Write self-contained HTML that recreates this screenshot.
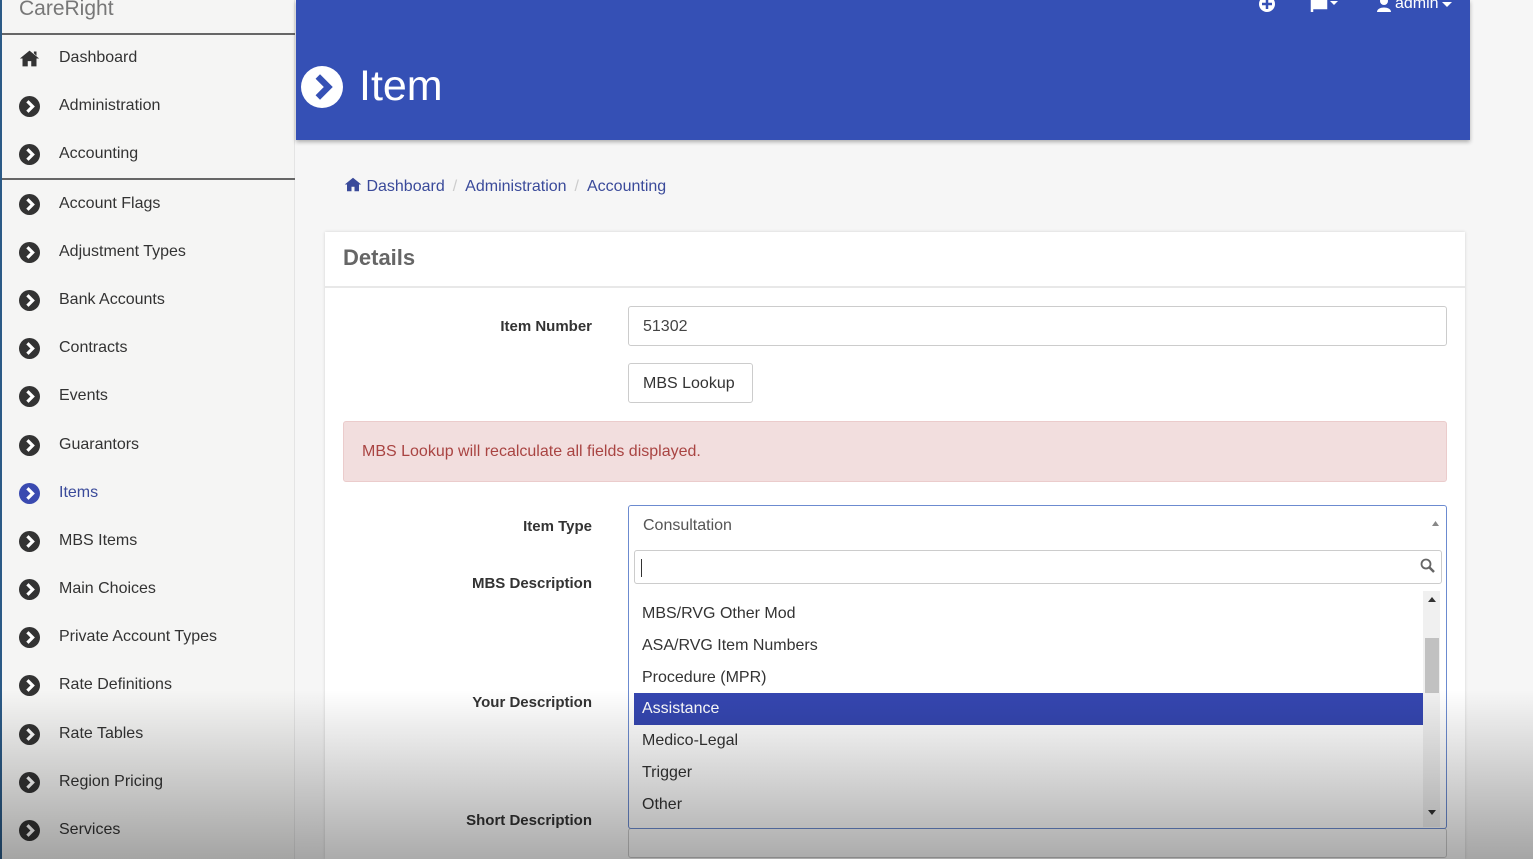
<!DOCTYPE html>
<html><head><meta charset="utf-8"><style>
*{box-sizing:border-box;margin:0;padding:0}
html{overflow:hidden;width:1533px;height:859px}
body{width:1533px;height:859px;overflow:hidden;background:#f6f6f6;font-family:"Liberation Sans",Arial,sans-serif;position:relative;color:#333}
.sb{position:absolute;left:0;top:0;width:295px;height:859px;background:#f5f5f4;border-left:2px solid #2b5a86;border-right:1px solid #e4e4e4}
.brand{position:absolute;left:17px;top:-3px;font-size:21px;color:#777}
.hr{position:absolute;left:0;width:293px;height:2px;background:#666}
.it{position:absolute;left:17px;height:24px;display:flex;align-items:center;font-size:16px;color:#333}
.it svg{width:21px;height:21px;margin-right:19px}
.hdr{position:absolute;left:296px;top:0;width:1174px;height:140px;background:#3550b5;box-shadow:0 2px 4px rgba(0,0,0,.3)}
.hdr h1{position:absolute;left:63px;top:62px;font-weight:normal;font-size:43px;color:#fff}
.bc{position:absolute;left:344px;top:177px;font-size:16px;color:#3a4a9a}
.bc span.s{color:#ccc;margin:0 8px}
.card{position:absolute;left:325px;top:232px;width:1140px;height:627px;overflow:hidden;background:#fff;box-shadow:0 0 3px rgba(0,0,0,.15)}
.ch{height:56px;border-bottom:2px solid #e8e8e8;padding:13px 18px;font-size:22px;font-weight:bold;color:#666}
.lbl{position:absolute;right:873px;font-size:15px;font-weight:bold;color:#333;text-align:right;white-space:nowrap}
.inp{position:absolute;left:303px;width:819px;height:40px;border:1px solid #ccc;border-radius:3px;padding:11px 14px;font-size:16px;color:#444}
.btn{position:absolute;left:303px;top:131px;width:125px;height:40px;border:1px solid #ccc;border-radius:3px;padding:11px 14px;font-size:16px;color:#333}
.alert{position:absolute;left:18px;top:189px;width:1104px;height:61px;background:#f2dede;border:1px solid #ebcccc;border-radius:3px;padding:21px 18px;font-size:16px;color:#a94442}
.dd{position:absolute;left:628px;top:505px;width:819px;height:324px;border:1px solid #6c8bd0;border-radius:3px;background:#fff}
.opt{position:absolute;left:5px;width:789px;height:32px;padding:7px 8px;font-size:16px;color:#333}
.shade{position:absolute;left:0;top:690px;width:1533px;height:169px;background:linear-gradient(rgba(0,0,0,0),rgba(0,0,0,.33));pointer-events:none}
</style></head><body>
<div class="sb">
<div class="brand">CareRight</div>
<div class="hr" style="top:33px"></div>
<div class="hr" style="top:178px"></div>
<div class="it" style="top:46px"><svg viewBox="0 0 24 22"><path d="M12 2L1 11h3v9h6v-6h4v6h6v-9h3z M17 3h3v5l-3-3z" fill="#333"/></svg>Dashboard</div>
<div class="it" style="top:94px"><svg viewBox="0 0 20 20"><circle cx="10" cy="10" r="10" fill="#333"/><path d="M8 5l5 5-5 5" stroke="#fff" stroke-width="3" fill="none"/></svg>Administration</div>
<div class="it" style="top:142px"><svg viewBox="0 0 20 20"><circle cx="10" cy="10" r="10" fill="#333"/><path d="M8 5l5 5-5 5" stroke="#fff" stroke-width="3" fill="none"/></svg>Accounting</div>
<div class="it" style="top:192px"><svg viewBox="0 0 20 20"><circle cx="10" cy="10" r="10" fill="#333"/><path d="M8 5l5 5-5 5" stroke="#fff" stroke-width="3" fill="none"/></svg>Account Flags</div>
<div class="it" style="top:240px"><svg viewBox="0 0 20 20"><circle cx="10" cy="10" r="10" fill="#333"/><path d="M8 5l5 5-5 5" stroke="#fff" stroke-width="3" fill="none"/></svg>Adjustment Types</div>
<div class="it" style="top:288px"><svg viewBox="0 0 20 20"><circle cx="10" cy="10" r="10" fill="#333"/><path d="M8 5l5 5-5 5" stroke="#fff" stroke-width="3" fill="none"/></svg>Bank Accounts</div>
<div class="it" style="top:336px"><svg viewBox="0 0 20 20"><circle cx="10" cy="10" r="10" fill="#333"/><path d="M8 5l5 5-5 5" stroke="#fff" stroke-width="3" fill="none"/></svg>Contracts</div>
<div class="it" style="top:384px"><svg viewBox="0 0 20 20"><circle cx="10" cy="10" r="10" fill="#333"/><path d="M8 5l5 5-5 5" stroke="#fff" stroke-width="3" fill="none"/></svg>Events</div>
<div class="it" style="top:433px"><svg viewBox="0 0 20 20"><circle cx="10" cy="10" r="10" fill="#333"/><path d="M8 5l5 5-5 5" stroke="#fff" stroke-width="3" fill="none"/></svg>Guarantors</div>
<div class="it" style="top:481px;color:#3a4a9a"><svg viewBox="0 0 20 20"><circle cx="10" cy="10" r="10" fill="#3a4ab0"/><path d="M8 5l5 5-5 5" stroke="#fff" stroke-width="3" fill="none"/></svg>Items</div>
<div class="it" style="top:529px"><svg viewBox="0 0 20 20"><circle cx="10" cy="10" r="10" fill="#333"/><path d="M8 5l5 5-5 5" stroke="#fff" stroke-width="3" fill="none"/></svg>MBS Items</div>
<div class="it" style="top:577px"><svg viewBox="0 0 20 20"><circle cx="10" cy="10" r="10" fill="#333"/><path d="M8 5l5 5-5 5" stroke="#fff" stroke-width="3" fill="none"/></svg>Main Choices</div>
<div class="it" style="top:625px"><svg viewBox="0 0 20 20"><circle cx="10" cy="10" r="10" fill="#333"/><path d="M8 5l5 5-5 5" stroke="#fff" stroke-width="3" fill="none"/></svg>Private Account Types</div>
<div class="it" style="top:673px"><svg viewBox="0 0 20 20"><circle cx="10" cy="10" r="10" fill="#333"/><path d="M8 5l5 5-5 5" stroke="#fff" stroke-width="3" fill="none"/></svg>Rate Definitions</div>
<div class="it" style="top:722px"><svg viewBox="0 0 20 20"><circle cx="10" cy="10" r="10" fill="#333"/><path d="M8 5l5 5-5 5" stroke="#fff" stroke-width="3" fill="none"/></svg>Rate Tables</div>
<div class="it" style="top:770px"><svg viewBox="0 0 20 20"><circle cx="10" cy="10" r="10" fill="#333"/><path d="M8 5l5 5-5 5" stroke="#fff" stroke-width="3" fill="none"/></svg>Region Pricing</div>
<div class="it" style="top:818px"><svg viewBox="0 0 20 20"><circle cx="10" cy="10" r="10" fill="#333"/><path d="M8 5l5 5-5 5" stroke="#fff" stroke-width="3" fill="none"/></svg>Services</div>
</div>
<div class="hdr">
<svg style="position:absolute;left:5px;top:66px" width="42" height="42" viewBox="0 0 20 20"><circle cx="10" cy="10" r="10" fill="#fff"/><path d="M8 5l5 5-5 5" stroke="#3550b5" stroke-width="3" fill="none"/></svg>
<h1>Item</h1>
<svg style="position:absolute;left:962px;top:-3px" width="18" height="16" viewBox="0 0 18 16"><circle cx="9" cy="7" r="8" fill="#fff"/><path d="M9 2v10M4 7h10" stroke="#3550b5" stroke-width="2.5"/></svg>
<svg style="position:absolute;left:1014px;top:-2px" width="30" height="14" viewBox="0 0 30 14"><path d="M2 0v14M2 1h14v9H2" fill="#fff" stroke="#fff" stroke-width="2.5"/><path d="M20 3h8l-4 4z" fill="#fff"/></svg>
<svg style="position:absolute;left:1080px;top:-4px" width="16" height="16" viewBox="0 0 16 16"><circle cx="8" cy="5" r="4" fill="#fff"/><path d="M1 16c0-6 14-6 14 0z" fill="#fff"/></svg>
<div style="position:absolute;left:1099px;top:-5px;color:#fff;font-size:16px">admin</div>
<svg style="position:absolute;left:1146px;top:2px" width="10" height="6"><path d="M0 0h10L5 5z" fill="#fff"/></svg>
</div>
<div class="bc"><svg width="18" height="15" viewBox="0 0 24 20" style="vertical-align:-1px"><path d="M12 1L1 10h3v9h6v-6h4v6h6v-9h3z" fill="#3a4a9a"/></svg> Dashboard<span class="s">/</span>Administration<span class="s">/</span>Accounting</div>
<div class="card">
<div class="ch">Details</div>
<div class="lbl" style="top:86px">Item Number</div>
<div class="inp" style="top:74px">51302</div>
<div class="btn">MBS Lookup</div>
<div class="alert">MBS Lookup will recalculate all fields displayed.</div>
<div class="lbl" style="top:286px">Item Type</div>
<div class="lbl" style="top:343px">MBS Description</div>
<div class="lbl" style="top:462px">Your Description</div>
<div class="lbl" style="top:580px">Short Description</div>
<div style="position:absolute;left:303px;top:596px;width:819px;height:30px;border:1px solid #ccc;border-radius:3px"></div>
</div>
<div class="dd">
<div style="position:absolute;left:14px;top:11px;font-size:16px;color:#555">Consultation</div>
<svg style="position:absolute;left:803px;top:15px" width="7" height="5"><path d="M0 5h7L3.5 0z" fill="#888"/></svg>
<div style="position:absolute;left:5px;top:44px;width:808px;height:34px;border:1px solid #ccc;border-radius:3px"><div style="position:absolute;left:6px;top:8px;width:1px;height:18px;background:#333"></div>
<svg style="position:absolute;left:785px;top:7px" width="16" height="16" viewBox="0 0 16 16"><circle cx="6" cy="6" r="4.5" stroke="#666" stroke-width="1.8" fill="none"/><path d="M9 9l5 5" stroke="#666" stroke-width="2.5"/></svg></div>
<div class="opt" style="top:92px">MBS/RVG Other Mod</div>
<div class="opt" style="top:124px">ASA/RVG Item Numbers</div>
<div class="opt" style="top:156px">Procedure (MPR)</div>
<div class="opt" style="top:187px;background:#3546b0;color:#fff">Assistance</div>
<div class="opt" style="top:219px">Medico-Legal</div>
<div class="opt" style="top:251px">Trigger</div>
<div class="opt" style="top:283px">Other</div>
<div style="position:absolute;left:794px;top:85px;width:17px;height:236px;background:#f0f0f0"></div>
<div style="position:absolute;left:796px;top:132px;width:14px;height:55px;background:#c1c1c1"></div>
<svg style="position:absolute;left:799px;top:91px" width="8" height="5"><path d="M0 5h8L4 0z" fill="#333"/></svg>
<svg style="position:absolute;left:799px;top:304px" width="8" height="5"><path d="M0 0h8L4 5z" fill="#333"/></svg>
</div>
<div class="shade"></div>
</body></html>
